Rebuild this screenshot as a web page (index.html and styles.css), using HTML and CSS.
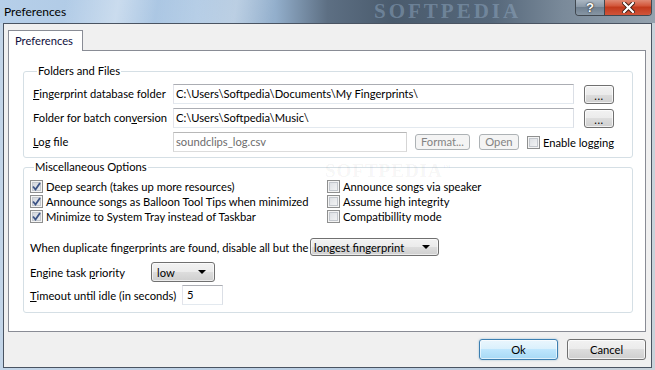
FILE: index.html
```html
<!DOCTYPE html>
<html>
<head>
<meta charset="utf-8">
<link rel="stylesheet" href="styles.css">
</head>
<body>
<div class="window">
  <div class="titlebar">
    <span class="title">Preferences</span>
    <span class="tb-mark">SOFTPEDIA</span>
    <div class="tb-btns">
      <span class="tb help">?</span>
      <span class="tb close"><svg width="13" height="11" viewBox="0 0 13 11"><path d="M2 1 L11 10 M11 1 L2 10" stroke="#3a1a10" stroke-width="4" stroke-linecap="square"/><path d="M2 1 L11 10 M11 1 L2 10" stroke="#fff" stroke-width="2.2" stroke-linecap="square"/></svg></span>
    </div>
  </div>
  <div class="client">
    <div class="tabs"><div class="tab">Preferences</div></div>
    <div class="panel">
      <span class="mark">SOFTPEDIA<sup>™</sup></span>
      <fieldset class="group g1">
        <legend>Folders and Files</legend>
        <div class="fgrid">
          <span class="lbl"><u>F</u>ingerprint database folder</span>
          <div class="ctl">
            <div class="input grow">C:\Users\Softpedia\Documents\My Fingerprints\</div>
            <span class="btn dots">...</span>
          </div>
          <span class="lbl">Folder for batch con<u>v</u>ersion</span>
          <div class="ctl">
            <div class="input grow">C:\Users\Softpedia\Music\</div>
            <span class="btn dots">...</span>
          </div>
          <span class="lbl"><u>L</u>og file</span>
          <div class="ctl log">
            <div class="input disabled login">soundclips_log.csv</div>
            <span class="btn small fmt">Format...</span>
            <span class="btn small opn">Open</span>
            <span class="check"><span class="box"></span>Enable logging</span>
          </div>
        </div>
      </fieldset>
      <fieldset class="group g2">
        <legend>Miscellaneous Options</legend>
        <div class="cgrid">
          <span class="check"><span class="box on"><svg width="9" height="9" viewBox="0 0 9 9"><path d="M1 4.5 L3.5 7.5 L8 1" fill="none" stroke="#3d5486" stroke-width="1.8"/></svg></span>Deep search (takes up more resources)</span>
          <span class="check"><span class="box"></span>Announce songs via speaker</span>
          <span class="check"><span class="box on"><svg width="9" height="9" viewBox="0 0 9 9"><path d="M1 4.5 L3.5 7.5 L8 1" fill="none" stroke="#3d5486" stroke-width="1.8"/></svg></span>Announce songs as Balloon Tool Tips when minimized</span>
          <span class="check"><span class="box"></span>Assume high integrity</span>
          <span class="check"><span class="box on"><svg width="9" height="9" viewBox="0 0 9 9"><path d="M1 4.5 L3.5 7.5 L8 1" fill="none" stroke="#3d5486" stroke-width="1.8"/></svg></span>Minimize to System Tray instead of Taskbar</span>
          <span class="check"><span class="box"></span>Compatibillity mode</span>
        </div>
        <div class="orow r-dup">
          <span class="olbl w-dup">When duplicate fingerprints are found, disable all but the</span>
          <span class="combo c-dup">longest fingerprint<span class="arrow"></span></span>
        </div>
        <div class="orow r-eng">
          <span class="olbl w-eng">Engine task <u>p</u>riority</span>
          <span class="combo c-eng">low<span class="arrow"></span></span>
        </div>
        <div class="orow r-to">
          <span class="olbl w-to"><u>T</u>imeout until idle (in seconds)</span>
          <div class="input to">5</div>
        </div>
      </fieldset>
    </div>
    <div class="footer">
      <span class="btn big ok">Ok</span>
      <span class="btn big">Cancel</span>
    </div>
  </div>
</div>
</body>
</html>
```
FILE: styles.css
```css
* { box-sizing: border-box; }
html, body { margin: 0; padding: 0; }
body {
  width: 655px;
  height: 370px;
  overflow: hidden;
  font-family: Lato, "Liberation Sans", sans-serif;
  font-size: 11.2px;
  color: #000;
}
.window {
  width: 655px;
  height: 370px;
  background: linear-gradient(90deg, #c3d5e8 0%, #b9cde2 60%, #c9d2da 100%);
  display: flex;
  flex-direction: column;
}
.titlebar {
  position: relative;
  height: 23px;
  flex: none;
  display: flex;
  align-items: center;
  padding-left: 4px;
  background:
    linear-gradient(100deg, rgba(255,255,255,0) 10%, rgba(255,255,255,0.35) 18%, rgba(255,255,255,0) 24%, rgba(255,255,255,0.3) 36%, rgba(255,255,255,0) 42%),
    linear-gradient(90deg, #b6cfe9 0%, #a9c5e2 30%, #93afcc 42%, #5d6f83 50%, #4a5b6d 60%, #55677a 75%, #7a8a9a 86%, #94a2ae 100%);
  overflow: hidden;
}
.title { font-size: 12px; color: #000; }
.tb-mark {
  position: absolute;
  left: 374px;
  top: 1px;
  line-height: 21px;
  font-family: "Liberation Serif", serif;
  font-weight: bold;
  font-size: 21px;
  letter-spacing: 3px;
  color: rgba(150, 175, 200, 0.45);
}
.tb-btns {
  position: absolute;
  right: 3px;
  top: -2px;
  display: flex;
  height: 18px;
  border: 1px solid #404850;
  border-top: none;
  border-radius: 0 0 4px 4px;
  overflow: hidden;
}
.tb {
  display: flex;
  align-items: center;
  justify-content: center;
  padding-top: 2px;
}
.help {
  width: 29px;
  background: linear-gradient(#b4c0cb, #8c9aa8 50%, #6e7e8e 51%, #8796a4);
  color: #fff;
  font-weight: bold;
  font-size: 13px;
  font-family: "Liberation Sans", sans-serif;
  text-shadow: 0 0 2px #222, 0 0 1px #222;
  border-right: 1px solid #40484f;
}
.close {
  width: 46px;
  background: linear-gradient(#e49a87, #d3583c 45%, #c23a1c 55%, #d0543a);
}
.client {
  flex: 1;
  margin: 0 3px 2px 3px;
  border: 1px solid #4a5462;
  background: #f0f0f0;
  padding: 6px 5px 0 4px;
  display: flex;
  flex-direction: column;
}
.tabs { display: flex; }
.tab {
  position: relative;
  z-index: 1;
  width: 75px;
  height: 21px;
  margin-bottom: -1px;
  border: 1px solid #898c95;
  border-bottom: none;
  background: #fff;
  padding-left: 6px;
  line-height: 19px;
  color: #101040;
  white-space: nowrap;
}
.panel {
  position: relative;
  height: 282px;
  border: 1px solid #898c95;
  background: #fff;
  padding-top: 12px;
}
.mark {
  position: absolute;
  left: 316px;
  top: 106px;
  line-height: 22px;
  font-family: "Liberation Serif", serif;
  font-weight: bold;
  font-size: 19px;
  letter-spacing: 1px;
  color: rgba(0, 0, 0, 0.05);
  pointer-events: none;
}
.mark sup { font-size: 8px; }
.group {
  margin: 0 12px 0 14px;
  border: 1px solid #d5dfe5;
  border-radius: 3px;
  padding: 0;
  min-width: 0;
}
.group legend {
  padding: 0 1px;
  margin-left: 4px;
  line-height: 16px;
  height: 16px;
  white-space: nowrap;
}
.g1 { padding: 5px 0 5px 9px; }
.g2 { margin-top: 1px; }
.fgrid {
  display: grid;
  grid-template-columns: 140px 441px;
  grid-auto-rows: 20px;
  row-gap: 4px;
  align-items: center;
}
.lbl { line-height: 16px; white-space: nowrap; }
.ctl {
  display: flex;
  align-items: center;
  height: 20px;
}
.input {
  height: 20px;
  border: 1px solid #abadb3;
  border-left-color: #e2e3ea;
  border-right-color: #dbdfe6;
  border-bottom-color: #e3e9ef;
  background: #fff;
  padding-left: 2px;
  line-height: 18px;
  white-space: nowrap;
  overflow: hidden;
}
.grow { flex: 1; }
.input.disabled {
  color: #6d6d6d;
  border-color: #b8b8b8 #d5d5d5 #dcdcdc #d5d5d5;
}
.login { width: 234px; flex: none; }
.btn {
  display: flex;
  align-items: center;
  justify-content: center;
  border: 1px solid #707070;
  border-radius: 3px;
  background: linear-gradient(#f2f2f2, #ebebeb 50%, #dddddd 50%, #cfcfcf);
  box-shadow: inset 0 0 0 1px rgba(255,255,255,0.7);
  white-space: nowrap;
}
.dots {
  width: 30px;
  height: 19px;
  margin-left: 10px;
  align-items: flex-end;
  padding-bottom: 2px;
  line-height: 10px;
  font-size: 11px;
  letter-spacing: 0.5px;
}
.small {
  height: 16px;
  border-color: #adb2b5;
  background: #f4f4f4;
  box-shadow: none;
  color: #838383;
  line-height: 14px;
}
.fmt { width: 55px; margin-left: 8px; }
.opn { width: 40px; margin-left: 9px; }
.check {
  display: flex;
  align-items: center;
  white-space: nowrap;
  line-height: 15px;
}
.log .check { margin-left: 8px; }
.box {
  width: 13px;
  height: 13px;
  flex: none;
  margin-right: 3px;
  border: 1px solid #8e8f8f;
  background: linear-gradient(135deg, #d8dbe0, #f8f8f8);
  box-shadow: inset 0 0 0 1px #f4f4f4, inset 0 0 0 2px #c3c7cd;
  display: flex;
  align-items: center;
  justify-content: center;
}
.box.on { background: linear-gradient(135deg, #cfd3d9, #eef0f2); }
.g2 { padding: 4px 0 7px 6px; }
.cgrid {
  display: grid;
  grid-template-columns: 297px auto;
  grid-auto-rows: 15px;
}
.orow {
  display: flex;
  align-items: center;
}
.r-dup { margin-top: 14px; height: 18px; }
.r-eng { margin-top: 6px; height: 20px; }
.r-to { margin-top: 3px; height: 20px; }
.olbl { flex: none; white-space: nowrap; }
.w-dup { width: 280px; }
.w-eng { width: 121px; }
.w-to { width: 152px; }
.combo {
  position: relative;
  display: flex;
  align-items: center;
  border: 1px solid #707070;
  border-radius: 3px;
  background: linear-gradient(#f2f2f2, #ebebeb 50%, #dddddd 50%, #cfcfcf);
  box-shadow: inset 0 0 0 1px rgba(255,255,255,0.6);
  padding-left: 3px;
  white-space: nowrap;
}
.c-dup { width: 129px; height: 18px; }
.c-eng { width: 64px; height: 20px; padding-left: 5px; }
.arrow {
  position: absolute;
  right: 8px;
  top: 50%;
  margin-top: -2px;
  width: 0;
  height: 0;
  border-left: 4px solid transparent;
  border-right: 4px solid transparent;
  border-top: 4px solid #000;
}
.to { width: 41px; padding-left: 4px; }
.footer {
  display: flex;
  justify-content: flex-end;
  gap: 9px;
  margin-top: 7px;
}
.big { width: 79px; height: 21px; }
.ok {
  border-color: #3c7fb1;
  background: linear-gradient(#eaf6fd, #d9f0fc 50%, #bee6fd 50%, #a7d9f5);
  box-shadow: inset 0 0 0 1px rgba(255,255,255,0.6), 0 0 2px rgba(60,127,177,0.5);
}
```
